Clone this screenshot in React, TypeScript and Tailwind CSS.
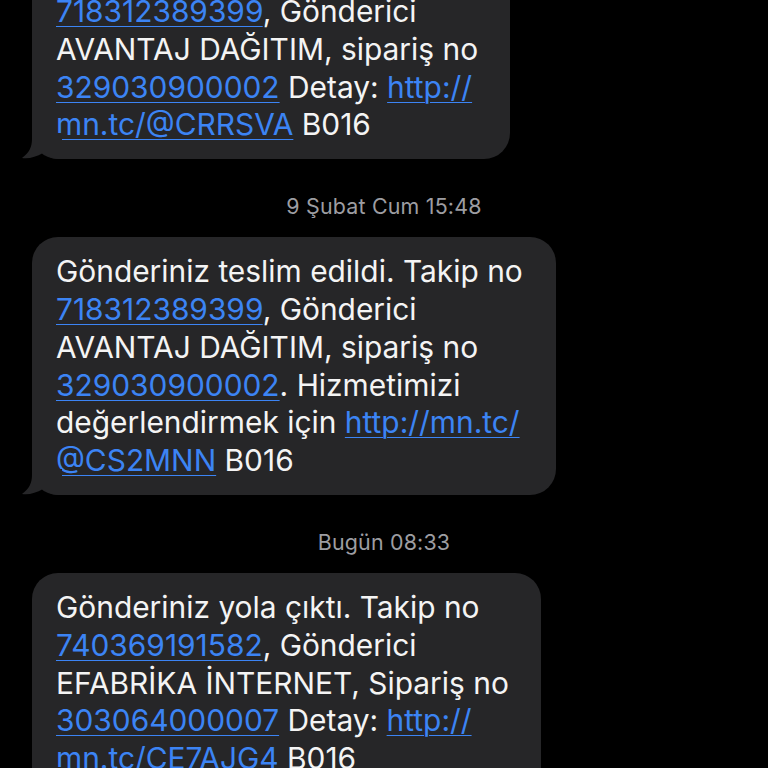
import type { ReactNode } from 'react';

type Line = ReactNode;

const Link = ({ children }: { children: ReactNode }) => (
  <span className="text-[#3c84f4] underline decoration-1 underline-offset-[4px]">{children}</span>
);

const Tail = () => (
  <svg
    className="absolute left-[-10px] bottom-0"
    width="40"
    height="26"
    viewBox="0 0 40 26"
    fill="#262628"
  >
    <path d="M10 0 L10 6 C10 14 7 20 0 25 C7 26 14 24 21 20 C26 24 31 26 40 26 L40 0 Z" />
  </svg>
);

const Bubble = ({ lines, className }: { lines: Line[]; className: string }) => (
  <div className={`relative ml-[32px] bg-[#262628] rounded-[26px] pl-[24px] pb-[15px] ${className}`}>
    {lines.map((l, i) => (
      <div key={i} className="whitespace-nowrap">{l}</div>
    ))}
    <Tail />
  </div>
);

const Stamp = ({ children }: { children: ReactNode }) => (
  <div className="mt-[35px] mb-[19px] text-center text-[21.4px] leading-[24px] text-[#9d9da2] tracking-[0.2px]">
    {children}
  </div>
);

export default function App() {
  return (
    <div
      className="w-[768px] h-[768px] overflow-hidden bg-black text-[#f4f4f4] text-[29.9px] leading-[37.8px]"
      style={{ fontFamily: 'Inter, "Noto Sans", sans-serif' }}
    >
      <div className="mt-[-7px] flex flex-col items-start">
        <Bubble
          className="w-[478px] pt-0 rounded-t-none"
          lines={[
            <><Link>718312389399</Link>, Gönderici</>,
            <>AVANTAJ DAĞITIM, sipariş no</>,
            <><Link>329030900002</Link> Detay: <Link>http://</Link></>,
            <><Link>mn.tc/@CRRSVA</Link> B016</>,
          ]}
        />
        <div className="self-stretch">
          <Stamp>9 Şubat Cum 15:48</Stamp>
        </div>
        <Bubble
          className="w-[524px] pt-[16px]"
          lines={[
            <>Gönderiniz teslim edildi. Takip no</>,
            <><Link>718312389399</Link>, Gönderici</>,
            <>AVANTAJ DAĞITIM, sipariş no</>,
            <><Link>329030900002</Link>. Hizmetimizi</>,
            <>değerlendirmek için <Link>http://mn.tc/</Link></>,
            <><Link>@CS2MNN</Link> B016</>,
          ]}
        />
        <div className="self-stretch">
          <Stamp>Bugün 08:33</Stamp>
        </div>
        <Bubble
          className="w-[509px] pt-[16px]"
          lines={[
            <>Gönderiniz yola çıktı. Takip no</>,
            <><Link>740369191582</Link>, Gönderici</>,
            <>EFABRİKA İNTERNET, Sipariş no</>,
            <><Link>303064000007</Link> Detay: <Link>http://</Link></>,
            <><Link>mn.tc/CE7AJG4</Link> B016</>,
          ]}
        />
      </div>
    </div>
  );
}
